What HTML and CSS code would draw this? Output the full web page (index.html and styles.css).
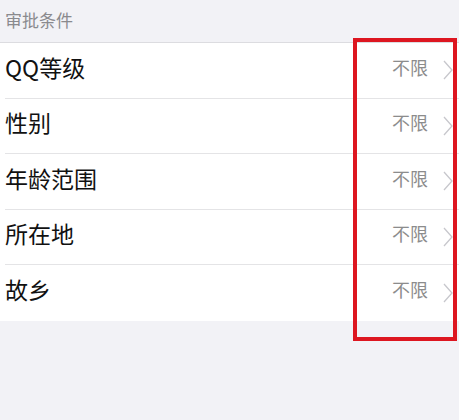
FILE: index.html
```html
<!DOCTYPE html>
<html>
<head>
  <meta charset="utf-8">
  <link rel="stylesheet" href="styles.css">
</head>
<body>
  <div class="section-title">审批条件</div>
  <ul class="cond-list">
    <li class="cond-row"><span class="cond-name">QQ等级</span><span class="cond-value">不限</span><svg class="chevron" viewBox="0 0 10 20"><path d="M1 1 L9 10 L1 19" /></svg></li>
    <li class="cond-row"><span class="cond-name">性别</span><span class="cond-value">不限</span><svg class="chevron" viewBox="0 0 10 20"><path d="M1 1 L9 10 L1 19" /></svg></li>
    <li class="cond-row"><span class="cond-name">年龄范围</span><span class="cond-value">不限</span><svg class="chevron" viewBox="0 0 10 20"><path d="M1 1 L9 10 L1 19" /></svg></li>
    <li class="cond-row"><span class="cond-name">所在地</span><span class="cond-value">不限</span><svg class="chevron" viewBox="0 0 10 20"><path d="M1 1 L9 10 L1 19" /></svg></li>
    <li class="cond-row"><span class="cond-name">故乡</span><span class="cond-value">不限</span><svg class="chevron" viewBox="0 0 10 20"><path d="M1 1 L9 10 L1 19" /></svg></li>
  </ul>
  <div class="highlight"></div>
</body>
</html>
```

FILE: styles.css
```css
body { margin: 0; background: #f2f2f6; font-family: "Noto Sans CJK SC", "Noto Sans", sans-serif; position: relative; height: 420px; overflow: hidden; }
.section-title { height: 42px; line-height: 40px; padding-left: 5px; font-size: 17px; color: #8a8a8e; border-bottom: 1px solid #dcdce0; }
.cond-list { list-style: none; margin: 0; padding: 0 0 0 5px; background: #fff; }
.cond-row { display: flex; align-items: center; box-sizing: border-box; height: 55.5px; padding-bottom: 7px; border-bottom: 1px solid #e4e4e6; padding-right: 6px; }
.cond-row:last-child { border-bottom: none; }
.cond-name { flex: 1; font-size: 23px; color: #111; }
.cond-value { font-size: 18px; color: #8c8c8c; margin-right: 15px; }
.chevron { width: 10px; height: 20px; margin-top: 7px; fill: none; stroke: #c7c7cc; stroke-width: 1.3; }
.highlight { position: absolute; left: 353px; top: 38px; width: 96px; height: 295px; border: 4px solid #dd1620; }
```
